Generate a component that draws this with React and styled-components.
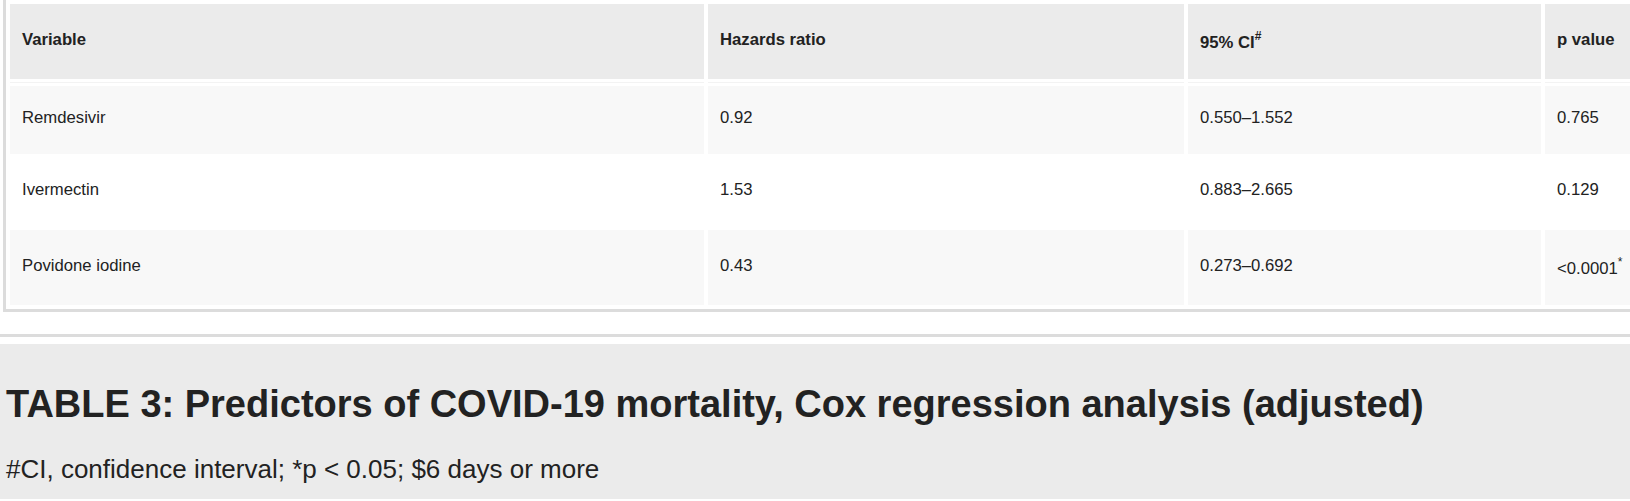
import React from "react"
import styled, { createGlobalStyle } from "styled-components"

const GlobalStyle = createGlobalStyle`
  html, body {
    margin: 0;
    padding: 0;
    background: #fff;
    overflow: hidden;
  }
  body {
    font-family: "Liberation Sans", Arial, sans-serif;
    color: #222;
  }
`

const Page = styled.div`
  width: 100%;
  display: flex;
  flex-direction: column;
`

const TableWrap = styled.div`
  padding-left: 3px;
`

const DataTable = styled.table`
  table-layout: fixed;
  width: 1679px;
  border-collapse: separate;
  border-spacing: 4px;
  border: 3px solid #dcdcdc;
  border-top: 0;
  font-size: 16.7px;
  line-height: 20px;
`

const HeadCell = styled.th`
  box-sizing: border-box;
  width: ${props => props.width}px;
  padding: 22px 12px 26px;
  background: #ebebeb;
  border-bottom: 3px solid #fff;
  box-shadow: 0 1px 0 #f3f3f3;
  text-align: left;
  font-weight: bold;
  vertical-align: middle;
`

const BodyRow = styled.tr`
  background: ${props => (props.$shade ? "#f8f8f8" : "#fff")};
`

const Cell = styled.td`
  box-sizing: border-box;
  padding: 22px 12px 26px;
  vertical-align: middle;
`

const Sup = styled.sup`
  font-size: 0.72em;
  vertical-align: 8px;
`

const Divider = styled.div`
  margin-top: 22px;
  height: 3px;
  background: #dcdcdc;
`

const CaptionBlock = styled.div`
  margin-top: 7px;
  background: #ebebeb;
  padding: 39px 6px 14px;
  display: flex;
  flex-direction: column;
  gap: 28px;
`

const Title = styled.h2`
  margin: 0;
  font-size: 38px;
  font-weight: bold;
  color: #222;
  white-space: nowrap;
`

const Note = styled.p`
  margin: 0;
  font-size: 26px;
  color: #222;
  white-space: nowrap;
`

const columns = [
  { label: "Variable", width: 694 },
  { label: "Hazards ratio", width: 476 },
  { label: "95% CI", sup: "#", width: 353 },
  { label: "p value", width: 130 },
]

const rows = [
  { name: "Remdesivir", hr: "0.92", ci: "0.550–1.552", p: "0.765" },
  { name: "Ivermectin", hr: "1.53", ci: "0.883–2.665", p: "0.129" },
  { name: "Povidone iodine", hr: "0.43", ci: "0.273–0.692", p: "<0.0001", pSup: "*" },
]

export default function App() {
  return (
    <Page>
      <GlobalStyle />
      <TableWrap>
        <DataTable>
          <thead>
            <tr>
              {columns.map(col => (
                <HeadCell key={col.label} width={col.width}>
                  {col.label}
                  {col.sup && <Sup>{col.sup}</Sup>}
                </HeadCell>
              ))}
            </tr>
          </thead>
          <tbody>
            {rows.map((row, i) => (
              <BodyRow key={row.name} $shade={i % 2 === 0}>
                <Cell>{row.name}</Cell>
                <Cell>{row.hr}</Cell>
                <Cell>{row.ci}</Cell>
                <Cell>
                  {row.p}
                  {row.pSup && <Sup>{row.pSup}</Sup>}
                </Cell>
              </BodyRow>
            ))}
          </tbody>
        </DataTable>
      </TableWrap>
      <Divider />
      <CaptionBlock>
        <Title>TABLE 3: Predictors of COVID-19 mortality, Cox regression analysis (adjusted)</Title>
        <Note>#CI, confidence interval; *p &lt; 0.05; $6 days or more</Note>
      </CaptionBlock>
    </Page>
  )
}
